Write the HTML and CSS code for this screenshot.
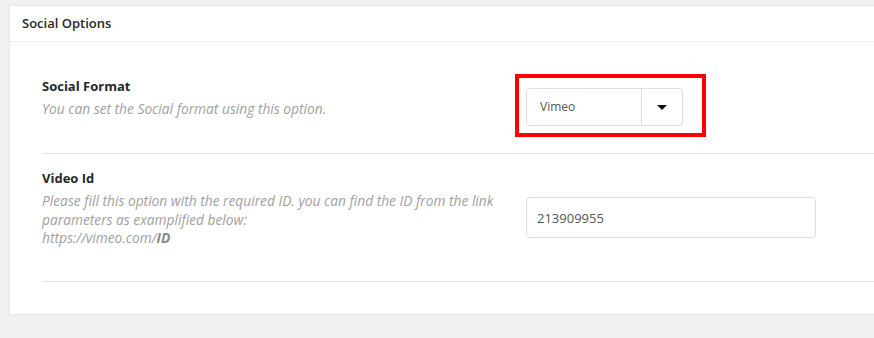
FILE: index.html
```html
<!DOCTYPE html>
<html lang="en">
<head>
  <meta charset="UTF-8">
  <meta name="viewport" content="width=device-width, initial-scale=1.0">
  <title>Social Options</title>
  <link rel="stylesheet" href="styles.css">
</head>
<body>
  <div class="panel">
    <h3 class="panel-title">Social Options</h3>
    <div class="panel-body">
      <div class="option option-first">
        <div class="option-info">
          <h4>Social Format</h4>
          <p class="desc">You can set the Social format using this option.</p>
        </div>
        <div class="option-field">
          <div class="select">
            <span class="select-value">Vimeo</span>
            <span class="select-arrow"></span>
          </div>
          <div class="highlight"></div>
        </div>
      </div>

      <div class="option option-second">
        <div class="option-info">
          <h4>Video Id</h4>
          <p class="desc">Please fill this option with the required ID. you can find the ID from the link parameters as examplified below:<br>https://vimeo.com/<b>ID</b></p>
        </div>
        <div class="option-field">
          <input type="text" class="text-input" value="213909955">
        </div>
      </div>
    </div>
  </div>
</body>
</html>
```

FILE: styles.css
```css
html, body {
  overflow: hidden;
}
body {
  margin: 0;
  padding: 5px 0 0 9px;
  background-color: #f1f1f1;
  font-family: "Open Sans", "Noto Sans", Arial, sans-serif;
  color: #23282d;
}
.panel {
  background: #ffffff;
  border: 1px solid #e5e5e5;
  box-shadow: 0 1px 1px rgba(0, 0, 0, 0.04);
  margin-right: -30px;
}
.panel-title {
  margin: 0;
  height: 35px;
  line-height: 35px;
  padding: 0 12px;
  font-size: 13px;
  font-weight: 600;
  border-bottom: 1px solid #eeeeee;
}
.panel-body {
  padding: 0 0 32px 32px;
}
.option {
  display: flex;
  border-bottom: 1px solid #e5e5e5;
}
.option-first {
  padding: 32px 0 27px;
}
.option-second {
  padding: 14px 0 33px;
}
.option-info {
  width: 460px;
  padding-right: 24px;
}
.option-info h4 {
  margin: 2px 0 4px;
  font-size: 13px;
  line-height: 20px;
  font-weight: 700;
}
.option-second .option-info h4 {
  margin-top: 0;
}
.desc {
  margin: 0;
  font-size: 13.75px;
  line-height: 18.5px;
  font-style: italic;
  color: #a0a0a0;
}
.desc b {
  color: #8a8a8a;
}
.option-field {
  position: relative;
}
.option-first .option-field {
  padding-top: 14px;
}
.option-second .option-field {
  padding-top: 29px;
}
.select {
  display: flex;
  width: 155px;
  height: 36px;
  border: 1px solid #dddddd;
  border-radius: 4px;
  font-size: 12px;
  color: #555555;
}
.select-value {
  flex: 1;
  line-height: 36px;
  padding-left: 13px;
  border-right: 1px solid #dddddd;
}
.select-arrow {
  width: 40px;
  display: flex;
  align-items: center;
  justify-content: center;
}
.select-arrow::after {
  content: "";
  border-left: 5px solid transparent;
  border-right: 5px solid transparent;
  border-top: 5px solid #111111;
}
.highlight {
  position: absolute;
  left: -11px;
  top: 0;
  width: 183px;
  height: 55px;
  border: 4px solid #ff0000;
}
.text-input {
  display: block;
  box-sizing: border-box;
  width: 290px;
  height: 41px;
  padding: 0 10px;
  border: 1px solid #dddddd;
  border-radius: 4px;
  font-family: "Open Sans", "Noto Sans", Arial, sans-serif;
  font-size: 13px;
  color: #555555;
  outline: none;
}
```
